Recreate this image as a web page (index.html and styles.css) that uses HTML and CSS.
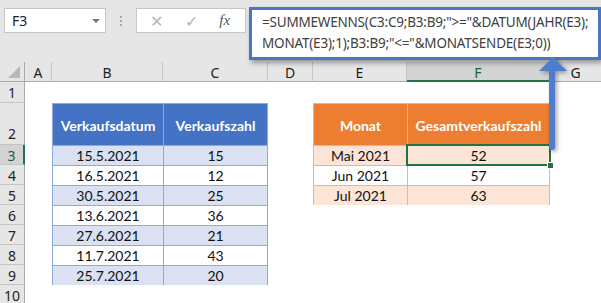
FILE: index.html
```html
<!doctype html>
<html lang="de">
  <head>
    <meta charset="UTF-8" />
    <title>SUMMEWENNS nach Monat</title>
    <link rel="stylesheet" href="styles.css">
  </head>
  <body>
    <div class="app">
      <div class="topbar">
        <div class="namebox"><span>F3</span><span class="caret"></span></div>
        <div class="grip"><i></i><i></i><i></i></div>
        <div class="fnbox">
          <span class="cancel">✕</span>
          <span class="enter">✓</span>
          <span class="fx">fx</span>
        </div>
      </div>

      <div class="formula">=SUMMEWENNS(C3:C9;B3:B9;"&gt;="&amp;DATUM(JAHR(E3);<br>MONAT(E3);1);B3:B9;"&lt;="&amp;MONATSENDE(E3;0))</div>

      <svg class="arrow" width="40" height="100" viewBox="0 0 40 100">
        <path d="M14 14 L14 91" stroke="#4f7ccb" stroke-width="6" stroke-linecap="round" />
        <path d="M1 15 L15 1 L29 15 Z" fill="#4f7ccb" />
      </svg>

      <div class="sheet">
        <div class="corner"><span></span></div>
        <div class="colhdr">A</div>
        <div class="colhdr">B</div>
        <div class="colhdr">C</div>
        <div class="colhdr">D</div>
        <div class="colhdr">E</div>
        <div class="colhdr active">F</div>
        <div class="colhdr last">G</div>

        <div class="rowhdr">1</div>
        <div class="rowhdr tall">2</div>
        <div class="rowhdr active">3</div>
        <div class="rowhdr">4</div>
        <div class="rowhdr">5</div>
        <div class="rowhdr">6</div>
        <div class="rowhdr">7</div>
        <div class="rowhdr">8</div>
        <div class="rowhdr">9</div>
        <div class="rowhdr">10</div>

        <div class="tbl blue">
          <div class="th">Verkaufsdatum</div><div class="th">Verkaufszahl</div>
          <div class="td band">15.5.2021</div><div class="td band">15</div>
          <div class="td">16.5.2021</div><div class="td">12</div>
          <div class="td band">30.5.2021</div><div class="td band">25</div>
          <div class="td">13.6.2021</div><div class="td">36</div>
          <div class="td band">27.6.2021</div><div class="td band">21</div>
          <div class="td">11.7.2021</div><div class="td">43</div>
          <div class="td band">25.7.2021</div><div class="td band">20</div>
        </div>

        <div class="tbl orange">
          <div class="th">Monat</div><div class="th">Gesamtverkaufszahl</div>
          <div class="td band">Mai 2021</div><div class="td band">52</div>
          <div class="td">Jun 2021</div><div class="td">57</div>
          <div class="td band">Jul 2021</div><div class="td band">63</div>
        </div>

        <div class="selection"></div>
      </div>
    </div>
  </body>
</html>
```

FILE: styles.css
```css
body {
  margin: 0;
  background: #ffffff;
  font-family: 'Noto Sans', 'Open Sans', sans-serif;
}
.app {
  position: relative;
  width: 601px;
  height: 303px;
  overflow: hidden;
}

/* ribbon strip with name box and formula buttons */
.topbar {
  height: 62px;
  background: #e6e6e6;
  display: flex;
  align-items: flex-start;
  padding: 8px 0 0 4px;
  box-sizing: border-box;
}
.namebox {
  width: 102px;
  height: 25px;
  box-sizing: border-box;
  background: #fff;
  border: 1px solid #c6c6c6;
  display: flex;
  align-items: center;
  justify-content: space-between;
  padding: 0 5px 0 7px;
  font-size: 14px;
  color: #222;
}
.caret {
  width: 0;
  height: 0;
  border-left: 4px solid transparent;
  border-right: 4px solid transparent;
  border-top: 4px solid #777;
}
.grip {
  width: 30px;
  height: 25px;
  display: flex;
  flex-direction: column;
  align-items: center;
  justify-content: center;
  gap: 2px;
}
.grip i {
  width: 2px;
  height: 2px;
  background: #a8a8a8;
}
.fnbox {
  width: 110px;
  height: 25px;
  box-sizing: border-box;
  background: #fff;
  border: 1px solid #c6c6c6;
  display: flex;
  align-items: center;
  justify-content: space-around;
  padding: 0 4px 0 2px;
  color: #b5b5b5;
  font-size: 16px;
}
.fnbox .fx {
  font-family: 'Liberation Serif', serif;
  font-style: italic;
  font-size: 15px;
  color: #555;
}

/* expanded formula bar callout */
.formula {
  position: absolute;
  left: 249px;
  top: 7px;
  width: 352px;
  height: 53px;
  box-sizing: border-box;
  background: #fff;
  border: 3px solid #4a74c4;
  box-shadow: 2px 3px 5px rgba(0, 0, 0, 0.35);
  padding: 2px 0 0 10px;
  font-size: 13.5px;
  line-height: 21px;
  color: #404040;
  white-space: nowrap;
  letter-spacing: -0.2px;
  z-index: 3;
}
.arrow {
  position: absolute;
  left: 538px;
  top: 56px;
  z-index: 4;
  filter: drop-shadow(2px 2px 2px rgba(0, 0, 0, 0.35));
}

/* worksheet */
.sheet {
  display: grid;
  grid-template-columns: 25px 27px 111px 105px 45px 94px 143px 1fr;
  grid-template-rows: 20px 21px 42px repeat(8, 20px);
}
.corner,
.colhdr,
.rowhdr {
  background: #e6e6e6;
  color: #222;
  font-size: 14px;
  display: flex;
  align-items: center;
  justify-content: center;
  box-sizing: border-box;
}
.corner {
  border-right: 1px solid #ababab;
  border-bottom: 1px solid #ababab;
  align-items: flex-end;
  justify-content: flex-end;
  padding: 0 4px 3px 0;
}
.corner span {
  width: 0;
  height: 0;
  border-left: 12px solid transparent;
  border-bottom: 12px solid #b7b7b7;
}
.colhdr {
  border-right: 1px solid #c4c4c4;
  border-bottom: 1px solid #ababab;
  padding-top: 2px;
}
.colhdr.last {
  border-right: none;
}
.colhdr.active {
  background: #d3d3d3;
  border-bottom: 2px solid #217346;
  color: #1f5f3a;
}
.rowhdr {
  grid-column: 1;
  border-right: 1px solid #ababab;
  border-bottom: 1px solid #c4c4c4;
  padding-top: 1px;
}
.rowhdr.tall {
  align-items: flex-end;
  padding-bottom: 1px;
}
.rowhdr.active {
  background: #d3d3d3;
  border-right: 2px solid #217346;
  color: #1f5f3a;
}

.tbl {
  display: grid;
  grid-template-rows: 41px;
  grid-auto-rows: 19px;
  gap: 1px;
  padding: 1px;
  font-family: 'Lato', 'Noto Sans', sans-serif;
  font-size: 14px;
  z-index: 1;
}
.tbl .th,
.tbl .td {
  display: flex;
  align-items: center;
  justify-content: center;
  background: #fff;
  color: #111;
}
.tbl .th {
  font-weight: bold;
  color: #fff;
  padding-top: 2px;
}
.blue {
  grid-column: 3 / 5;
  grid-row: 3 / 11;
  grid-template-columns: 110px 1fr;
  background: #8ea9db;
}
.blue .th {
  background: #4472c4;
}
.blue .band {
  background: #d9e1f2;
}
.orange {
  grid-column: 6 / 8;
  grid-row: 3 / 7;
  grid-template-columns: 93px 1fr;
  background: #f4b084;
}
.orange .th {
  background: #ed7d31;
}
.orange .band {
  background: #fce4d6;
}

.selection {
  grid-column: 7;
  grid-row: 4;
  position: relative;
  margin: -1px;
  border: 2px solid #217346;
  z-index: 2;
}
.selection::after {
  content: '';
  position: absolute;
  right: -5px;
  bottom: -5px;
  width: 5px;
  height: 5px;
  background: #217346;
  border: 1px solid #fff;
}
```
